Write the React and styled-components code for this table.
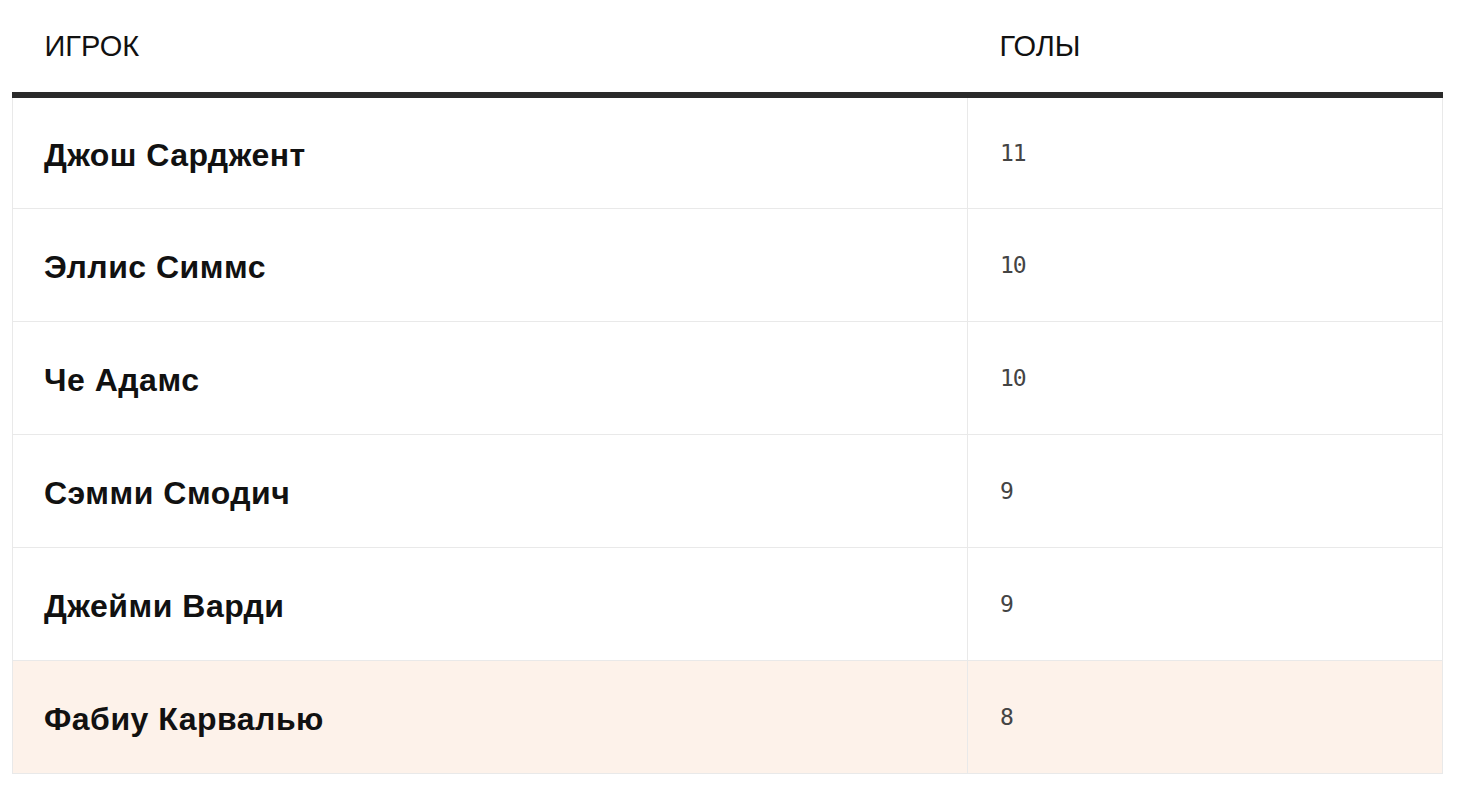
import React from "react";
import styled, { createGlobalStyle } from "styled-components";

const players = [
    { name: "Джош Сарджент", goals: 11 },
    { name: "Эллис Симмс", goals: 10 },
    { name: "Че Адамс", goals: 10 },
    { name: "Сэмми Смодич", goals: 9 },
    { name: "Джейми Варди", goals: 9 },
    { name: "Фабиу Карвалью", goals: 8, highlight: true },
];

const App = () => {
    return (
        <Wrapper>
            <GlobalStyle />
            <Table>
                <thead>
                    <tr>
                        <TableHeader>ИГРОК</TableHeader>
                        <TableHeader>ГОЛЫ</TableHeader>
                    </tr>
                </thead>
                <tbody>
                    {players.map((player, index) => (
                        <TableRow key={index} $highlight={player.highlight}>
                            <NameCell>{player.name}</NameCell>
                            <GoalsCell>{player.goals}</GoalsCell>
                        </TableRow>
                    ))}
                </tbody>
            </Table>
        </Wrapper>
    );
};

export default App;

const GlobalStyle = createGlobalStyle`
    body {
        margin: 0;
        background: #ffffff;
    }
`;

const Wrapper = styled.div`
    width: 1460px;
    padding: 0 17px 0 12px;
    box-sizing: border-box;
`;

const Table = styled.table`
    width: 100%;
    border-collapse: collapse;
    table-layout: fixed;
    font-family: "Liberation Sans", Arial, sans-serif;
`;

const TableHeader = styled.th`
    height: 92px;
    padding: 0 0 0 32px;
    text-align: left;
    vertical-align: middle;
    font-family: "Liberation Sans", Arial, sans-serif;
    font-weight: normal;
    font-size: 29px;
    color: #111;
    border-bottom: 6px solid #2a2a2a;

    &:first-child {
        width: 923px;
    }
`;

const TableRow = styled.tr`
    height: 113px;
    background-color: ${(p) => (p.$highlight ? "#fdf2ea" : "#ffffff")};
`;

const NameCell = styled.td`
    padding: 6px 0 0 31px;
    border: 1px solid #e9e9e9;
    font-family: "Liberation Sans", Arial, sans-serif;
    font-size: 32px;
    letter-spacing: 0.5px;
    font-weight: bold;
    color: #111;
    vertical-align: middle;
`;

const GoalsCell = styled.td`
    padding: 0 0 0 32px;
    border: 1px solid #e9e9e9;
    font-family: "DejaVu Sans Mono", monospace;
    font-size: 23px;
    letter-spacing: -1px;
    color: #444;
    vertical-align: middle;
`;
